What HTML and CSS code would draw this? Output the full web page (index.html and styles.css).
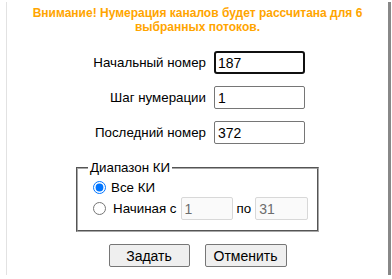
FILE: index.html
```html
<!DOCTYPE html>
<html lang="ru">
  <head>
    <meta charset="UTF-8" />
    <title>Нумерация каналов</title>
    <link rel="stylesheet" href="styles.css">
  </head>
  <body>
    <div class="panel">
      <div class="warning">Внимание! Нумерация каналов будет рассчитана для 6 выбранных потоков.</div>
      <div class="form-grid">
        <label for="start-num">Начальный номер</label>
        <input type="text" id="start-num" class="focused" value="187" />
        <label for="step-num">Шаг нумерации</label>
        <input type="text" id="step-num" value="1" />
        <label for="last-num">Последний номер</label>
        <input type="text" id="last-num" value="372" />
      </div>
      <fieldset class="range">
        <legend>Диапазон КИ</legend>
        <div class="radio-row first">
          <input type="radio" name="range" id="range-all" checked />
          <label for="range-all">Все КИ</label>
        </div>
        <div class="radio-row">
          <input type="radio" name="range" id="range-from" />
          <label for="range-from" class="from-label">Начиная с</label>
          <input type="text" class="small" value="1" disabled />
          <span class="to-label">по</span>
          <input type="text" class="small" value="31" disabled />
        </div>
      </fieldset>
      <div class="actions">
        <button class="ok-btn">Задать</button>
        <button class="cancel-btn">Отменить</button>
      </div>
    </div>
  </body>
</html>
```
FILE: styles.css
```css
body {
  font-family: "Liberation Sans", Arial, sans-serif;
  font-size: 13.333px;
  color: #000000;
  background: #ffffff;
  margin: 0;
  padding: 0;
}
.panel {
  margin: 2px 1px 0 6px;
  height: 273px;
  border-left: 1px solid #e2e2e2;
  border-right: 3px solid #888888;
  box-sizing: border-box;
}
.warning {
  color: #ffa500;
  font-size: 12px;
  font-weight: bold;
  text-align: center;
  line-height: 14px;
  padding: 4px 10px 0;
}
.form-grid {
  display: grid;
  grid-template-columns: 199px 91px;
  column-gap: 8px;
  row-gap: 12px;
  align-items: center;
  margin-top: 17px;
}
.form-grid label {
  text-align: right;
  white-space: nowrap;
}
input[type="text"] {
  font-family: "Liberation Sans", Arial, sans-serif;
  font-size: 14px;
  height: 23px;
  box-sizing: border-box;
  border: 1px solid #767676;
  border-radius: 2px;
  padding: 1px 3px;
  margin: 0;
}
input.focused {
  border: 2px solid #101010;
  border-radius: 3px;
  padding: 0 2px;
}
.range {
  margin: 16px 0 0 69px;
  width: 242px;
  box-sizing: border-box;
  border: 2px groove #a8a8a8;
  padding: 3px 9px 10px 11px;
}
.range legend {
  padding: 0 2px;
  margin-left: -1px;
}
.radio-row {
  display: flex;
  align-items: center;
  white-space: nowrap;
}
.radio-row.first {
  height: 19px;
}
.radio-row input[type="radio"] {
  margin: 0 1px 0 4px;
  width: 13px;
  height: 13px;
  flex-shrink: 0;
}
.radio-row label {
  margin-left: 4px;
}
.radio-row .from-label {
  margin-left: 6px;
  margin-right: 4px;
}
.radio-row .to-label {
  margin: 0 4px 0 4px;
}
input.small {
  width: 52px;
  flex-shrink: 0;
  background: #fafafa;
  color: #6d6d6d;
  border-color: #d8d8d8;
}
input.small + .to-label + input.small {
  width: 53px;
}
.actions {
  display: flex;
  justify-content: center;
  gap: 15px;
  margin-top: 12px;
}
.actions button {
  font-family: "Liberation Sans", Arial, sans-serif;
  font-size: 14px;
  height: 23px;
  padding: 0;
  background: #efefef;
  border: 1px solid #767676;
  border-radius: 2px;
}
.ok-btn {
  width: 81px;
}
.cancel-btn {
  width: 82px;
}
```
